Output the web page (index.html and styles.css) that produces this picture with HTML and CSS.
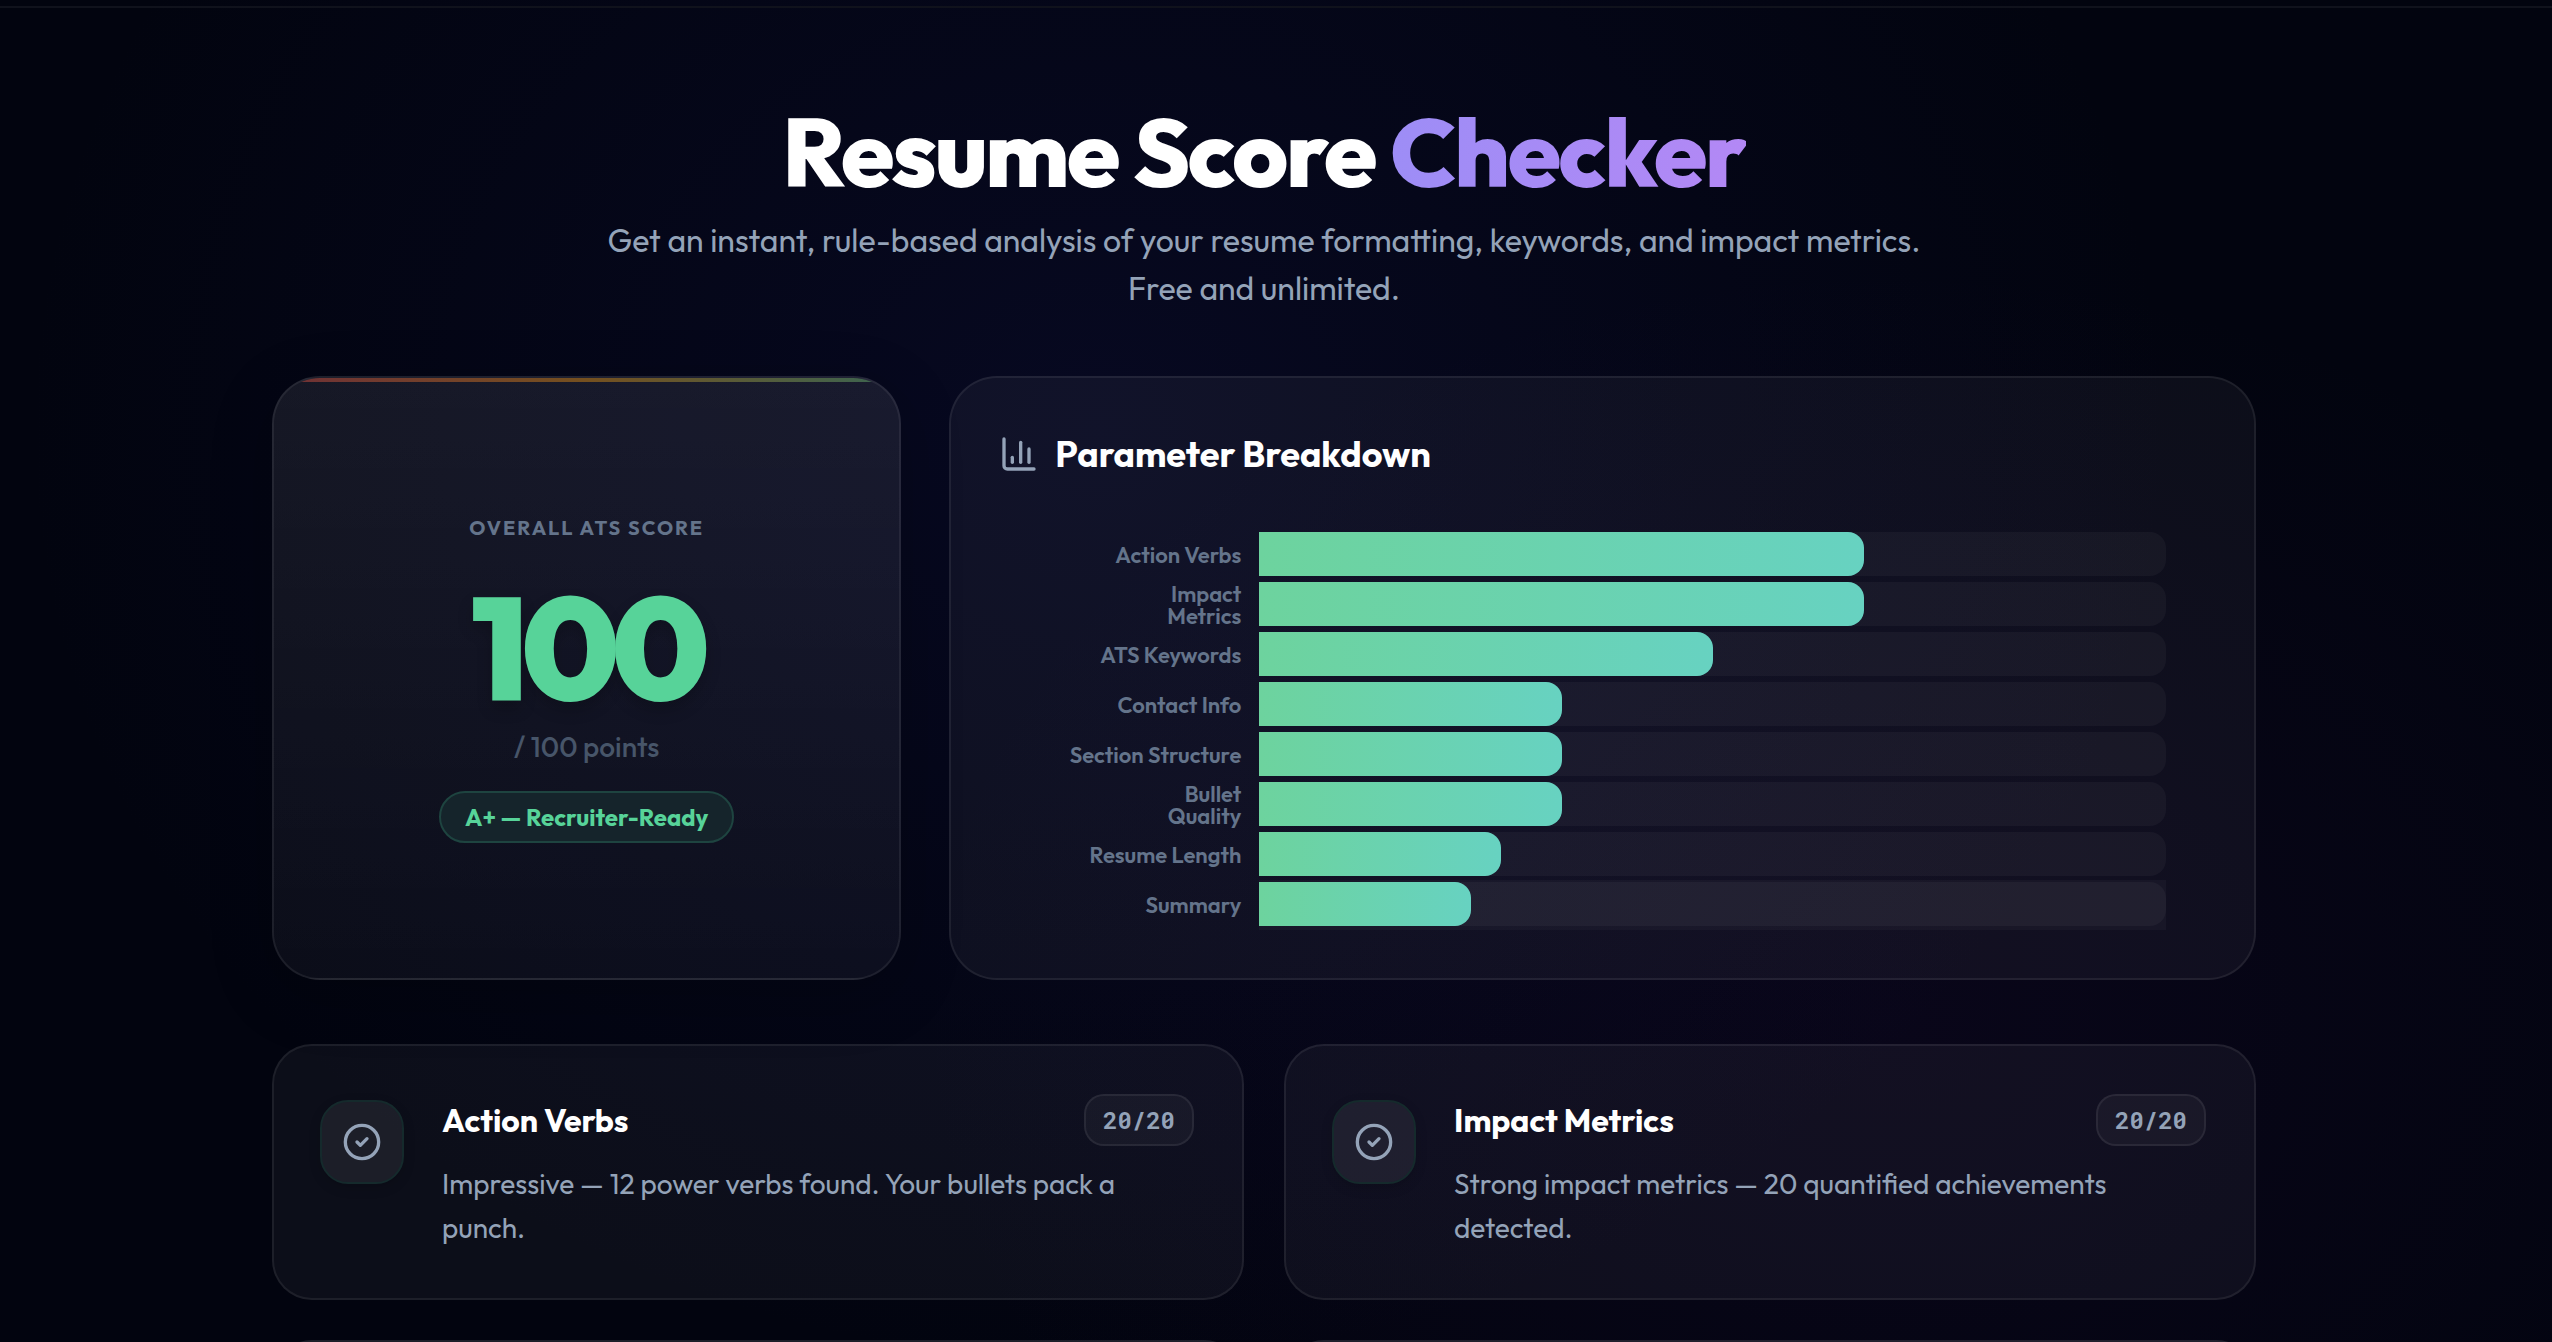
FILE: index.html
```html
<!DOCTYPE html>
<html lang="en">
<head>
<meta charset="utf-8">
<meta name="viewport" content="width=device-width, initial-scale=1">
<title>Resume Score Checker</title>
<link rel="stylesheet" href="styles.css">
</head>
<body>
<div class="page">
  <header class="topbar"></header>
  <main class="content">
    <section class="hero">
      <h1 class="hero-title">Resume Score <span class="accent">Checker</span></h1>
      <p class="hero-text">Get an instant, rule-based analysis of your resume formatting, keywords, and impact metrics. Free and unlimited.</p>
    </section>

    <section class="overview">
      <article class="card score-card">
        <h2 class="score-label">Overall ATS Score</h2>
        <div class="score-value">100</div>
        <p class="score-points">/ 100 points</p>
        <span class="score-badge">A+ — Recruiter-Ready</span>
      </article>

      <article class="card chart-card">
        <h2 class="chart-title">
          <svg class="icon" viewBox="0 0 24 24" aria-hidden="true"><path d="M3 3v16a2 2 0 0 0 2 2h16"/><path d="M18 17V9"/><path d="M13 17V5"/><path d="M8 17v-3"/></svg>
          Parameter Breakdown
        </h2>
        <ul class="chart">
          <li class="row"><span class="row-label">Action Verbs</span><div class="slot"><div class="track"><div class="bar" style="width:66.667%"></div></div></div></li>
          <li class="row"><span class="row-label">Impact<br>Metrics</span><div class="slot"><div class="track"><div class="bar" style="width:66.667%"></div></div></div></li>
          <li class="row"><span class="row-label">ATS Keywords</span><div class="slot"><div class="track"><div class="bar" style="width:50%"></div></div></div></li>
          <li class="row"><span class="row-label">Contact Info</span><div class="slot"><div class="track"><div class="bar" style="width:33.333%"></div></div></div></li>
          <li class="row"><span class="row-label">Section Structure</span><div class="slot"><div class="track"><div class="bar" style="width:33.333%"></div></div></div></li>
          <li class="row"><span class="row-label">Bullet<br>Quality</span><div class="slot"><div class="track"><div class="bar" style="width:33.333%"></div></div></div></li>
          <li class="row"><span class="row-label">Resume Length</span><div class="slot"><div class="track"><div class="bar" style="width:26.667%"></div></div></div></li>
          <li class="row row-active"><span class="row-label">Summary</span><div class="slot"><div class="track"><div class="bar" style="width:23.333%"></div></div></div></li>
        </ul>
      </article>
    </section>

    <section class="details">
      <article class="card detail">
        <div class="detail-icon"><svg class="icon" viewBox="0 0 24 24" aria-hidden="true"><circle cx="12" cy="12" r="10"/><path d="m9 12 2 2 4-4"/></svg></div>
        <div class="detail-body">
          <div class="detail-head"><h3 class="detail-title">Action Verbs</h3><span class="points">20/20</span></div>
          <p class="detail-text">Impressive — 12 power verbs found. Your bullets pack a punch.</p>
        </div>
      </article>
      <article class="card detail">
        <div class="detail-icon"><svg class="icon" viewBox="0 0 24 24" aria-hidden="true"><circle cx="12" cy="12" r="10"/><path d="m9 12 2 2 4-4"/></svg></div>
        <div class="detail-body">
          <div class="detail-head"><h3 class="detail-title">Impact Metrics</h3><span class="points">20/20</span></div>
          <p class="detail-text">Strong impact metrics — 20 quantified achievements detected.</p>
        </div>
      </article>
      <article class="card detail"></article>
      <article class="card detail"></article>
    </section>
  </main>
</div>
</body>
</html>
```
FILE: styles.css
```css
*, *::before, *::after { box-sizing: border-box; }

body, h1, h2, h3, p, ul { margin: 0; padding: 0; }

body {
  background: #02040f;
  color: #fff;
  font-family: "Outfit", "Lato", sans-serif;
}

.page {
  height: 100vh;
  overflow: hidden;
  background:
    radial-gradient(ellipse 42% 70% at 43% 32%, rgba(26, 27, 100, 0.21), transparent),
    radial-gradient(ellipse 38% 56% at 74% 76%, rgba(60, 20, 100, 0.12), transparent),
    #02040f;
}

.topbar {
  height: 8px;
  border-bottom: 2px solid #10121c;
}

.content {
  max-width: 2104px;
  margin: 0 auto;
  padding: 96px 72px 96px 48px;
}

.hero {
  max-width: 1344px;
  margin: 0 auto 64px;
  text-align: center;
}

.hero-title {
  margin-bottom: 16px;
  font-size: 96px;
  font-weight: 800;
  line-height: 96px;
  letter-spacing: -0.025em;
}

.accent {
  background: linear-gradient(90deg, #9d8df6, #b388f5);
  background-clip: text;
  -webkit-background-clip: text;
  color: transparent;
}

.hero-text {
  color: #94a3b8;
  font-size: 32px;
  line-height: 48px;
}

.card {
  border: 2px solid rgba(255, 255, 255, 0.07);
  border-radius: 40px;
  background: rgba(255, 255, 255, 0.045);
}

.icon {
  width: 40px;
  height: 40px;
  flex: none;
  fill: none;
  stroke: #94a3b8;
  stroke-width: 2;
  stroke-linecap: round;
  stroke-linejoin: round;
}

.overview {
  display: grid;
  grid-template-columns: repeat(12, minmax(0, 1fr));
  gap: 48px;
  margin-bottom: 64px;
}

.score-card {
  position: relative;
  grid-column: span 4;
  display: flex;
  flex-direction: column;
  align-items: center;
  justify-content: center;
  overflow: hidden;
  border-radius: 48px;
  background: linear-gradient(180deg, rgba(255, 255, 255, 0.08), rgba(255, 255, 255, 0.04));
  box-shadow: 0 16px 64px rgba(0, 0, 0, 0.2);
}

.score-card::before {
  content: "";
  position: absolute;
  top: 0;
  left: 0;
  right: 0;
  height: 4px;
  background: linear-gradient(90deg, #703036, #75501f, #3b6652);
}

.score-label {
  margin-bottom: 32px;
  color: #64748b;
  font-size: 20px;
  font-weight: 700;
  line-height: 30px;
  letter-spacing: 0.1em;
  text-transform: uppercase;
}

.score-value {
  margin-bottom: 8px;
  color: #57d399;
  font-size: 144px;
  font-weight: 900;
  line-height: 144px;
  letter-spacing: -0.05em;
  text-shadow: 0 8px 16px rgba(0, 0, 0, 0.2);
}

.score-points {
  margin-bottom: 24px;
  color: #475569;
  font-size: 28px;
  font-weight: 500;
  line-height: 40px;
}

.score-badge {
  padding: 8px 24px;
  border: 2px solid #1e4440;
  border-radius: 26px;
  background: #15242b;
  color: #57d399;
  font-size: 24px;
  font-weight: 700;
  line-height: 32px;
}

.chart-card {
  grid-column: span 8;
  padding: 48px;
  border-radius: 48px;
}

.chart-title {
  display: flex;
  align-items: center;
  gap: 16px;
  margin-bottom: 48px;
  font-size: 36px;
  font-weight: 700;
  line-height: 56px;
}

.chart {
  padding-right: 40px;
  list-style: none;
}

.row {
  display: grid;
  grid-template-columns: 242px minmax(0, 1fr);
  gap: 18px;
  align-items: center;
  height: 50px;
}

.row-label {
  color: #64748b;
  font-size: 22px;
  font-weight: 600;
  line-height: 22px;
  text-align: right;
}

.slot { padding: 2px 0 4px; }

.row-active .slot { background: rgba(255, 255, 255, 0.03); }

.track {
  height: 44px;
  border-radius: 0 16px 16px 0;
  background: rgba(255, 255, 255, 0.04);
}

.bar {
  height: 100%;
  border-radius: 0 16px 16px 0;
  background: linear-gradient(90deg, #6dd39e, #67d2c1);
}

.details {
  display: grid;
  grid-template-columns: repeat(2, minmax(0, 1fr));
  gap: 40px;
}

.detail {
  display: flex;
  align-items: flex-start;
  gap: 38px;
  min-height: 256px;
  padding: 48px 48px 48px 46px;
}

.detail-icon {
  display: grid;
  place-items: center;
  flex: none;
  width: 84px;
  height: 84px;
  margin-top: 6px;
  border: 2px solid #152a2c;
  border-radius: 28px;
  background: rgba(255, 255, 255, 0.065);
  box-shadow: 0 4px 12px rgba(0, 0, 0, 0.15);
}

.detail-body { flex: 1; }

.detail-head {
  display: flex;
  align-items: center;
  justify-content: space-between;
  margin-bottom: 16px;
}

.detail-title {
  font-size: 32px;
  font-weight: 700;
  line-height: 48px;
}

.points {
  min-width: 110px;
  padding: 8px 16px;
  border: 2px solid rgba(255, 255, 255, 0.07);
  border-radius: 20px;
  background: rgba(255, 255, 255, 0.04);
  color: #94a3b8;
  font-family: "Roboto Mono", "Liberation Mono", monospace;
  font-size: 24px;
  font-weight: 700;
  line-height: 32px;
  text-align: center;
}

.detail-text {
  color: #94a3b8;
  font-size: 28px;
  line-height: 44px;
}
```
